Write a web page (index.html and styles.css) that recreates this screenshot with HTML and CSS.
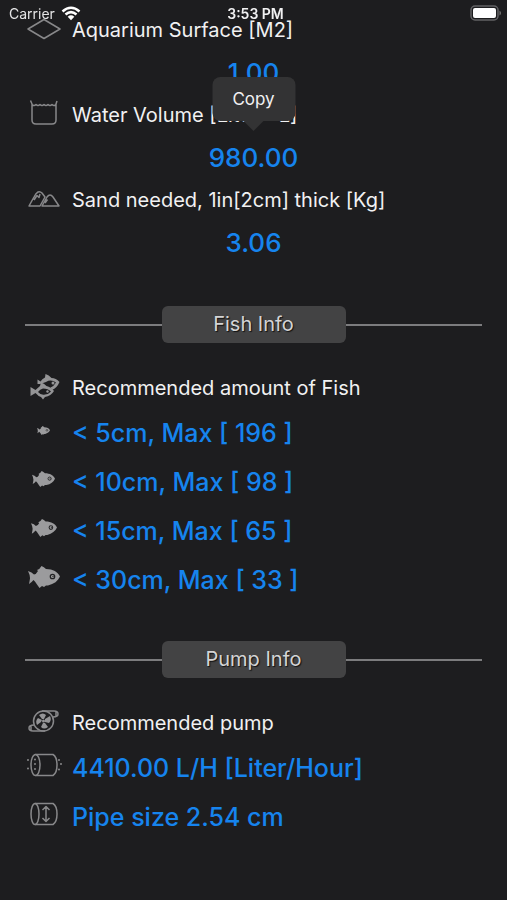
FILE: index.html
```html
<!DOCTYPE html>
<html lang="en">
<head>
<meta charset="utf-8">
<meta name="viewport" content="width=device-width, initial-scale=1">
<title>Aquarium Calculator</title>
<link rel="stylesheet" href="styles.css">
</head>
<body>
<svg class="sprite" aria-hidden="true">
  <symbol id="fish" viewBox="0 0 32 22">
    <path d="M0 5Q4 6 6 8.500Q8 8.500 10 5L9 4Q12 3 13.500 0Q16 1 18 3C25 3 30 6 32 10.500C30 15 26 18 20 19.500L18 19.500L16 21L14 20L11.500 22L9 18.500Q7 15 5.500 14Q4 16 1 18Q2 13 2 12Q2 9 0 5Z" fill="currentColor"/>
    <circle cx="24.500" cy="10.500" r="2.200" fill="#a3a3a3" stroke="#242426" stroke-width="1.300"/>
    <circle cx="25" cy="10.500" r=".7" fill="#242426"/>
  </symbol>
</svg>

<header class="status">
  <div class="carrier">
    <span>Carrier</span>
    <svg class="wifi" viewBox="0 0 20 15" aria-hidden="true">
      <path d="M1.500 5.500Q10 -2 18.500 5.500M4.500 8.500Q10 3.700 15.500 8.500" fill="none" stroke="currentColor" stroke-width="2.500"/>
      <path d="M6.700 10.700Q10 8 13.300 10.700L10 14.200Z" fill="currentColor"/>
    </svg>
  </div>
  <time class="clock">3:53 PM</time>
  <svg class="battery" viewBox="0 0 32 16" aria-hidden="true">
    <rect x="1" y="1" width="27" height="14" rx="4" fill="none" stroke="#626264" stroke-width="1.500"/>
    <rect x="3" y="3" width="23" height="10" rx="2" fill="#fff"/>
    <path d="M29.500 5.500Q31 6.500 31 8T29.500 10.500Z" fill="#777"/>
  </svg>
</header>

<main class="page">
  <section class="results">
    <div class="row">
      <svg class="icon" viewBox="0 0 36 36" aria-hidden="true"><path d="M3 19L19 9.500L35 19L19 28.500Z"/></svg>
      <span class="label">Aquarium Surface [M2]</span>
    </div>
    <div class="result"><output>1.00</output></div>

    <div class="row">
      <svg class="icon" viewBox="0 0 36 36" aria-hidden="true"><path d="M5.500 5.500L7 9V25Q7 29 11 29H27Q31 29 31 25V9L32 6M7 9.500Q9 11.500 11 9.500Q13 11.500 15 9.500Q17 11.500 19 9.500Q21 11.500 23 9.500Q25 11.500 27 9.500Q29 11.500 31 9.500"/></svg>
      <span class="label">Water Volume [Liter - L]</span>
    </div>
    <div class="result">
      <output>980.00</output>
      <button class="copy" type="button">Copy</button>
    </div>

    <div class="row">
      <svg class="icon" viewBox="0 0 36 36" aria-hidden="true"><path d="M15 26H4L9 17Q13 9 17 13L20 17L15 26ZM17 26L22 17Q25 13 28 17L34 26ZM9 20L12 15.500L14 17.500L15 14M20 23L22.500 19.500"/></svg>
      <span class="label">Sand needed, 1in[2cm] thick [Kg]</span>
    </div>
    <div class="result"><output>3.06</output></div>
  </section>

  <section class="group">
    <h2 class="divider"><span>Fish Info</span></h2>
    <div class="row">
      <svg class="icon" viewBox="0 0 36 36" aria-hidden="true">
        <path class="solid" d="M12.500 16V11.500L15.500 13.500Q17 11 20 9.500L20.500 6Q24 7 26.500 10Q31 10 34.500 14Q32 20 27 22L25.500 19.500Q29 18 31 14.500Q26 11 21 14L18 15L15 16Z"/>
        <path class="solid" fill-rule="evenodd" d="M5.500 19L10.500 22L15 18L16 14.500Q19 15 21.500 18Q26 19 29 23Q26 28 20 29L18 31.500L16 29Q13 28 10.500 25L5.500 28ZM13 24Q16 27.500 20 26.500Q24 26 26 23.500Q23 20.500 18 20.500Q15 21 13 24Z"/>
        <circle class="solid" cx="22.500" cy="23.500" r="1.200"/><circle class="solid" cx="28" cy="15" r="1.500"/>
      </svg>
      <span class="label">Recommended amount of Fish</span>
    </div>
    <div class="row value"><svg class="icon" viewBox="0 0 36 36" aria-hidden="true"><use href="#fish" x="12" y="14" width="13" height="9"/></svg><output>&lt; 5cm, Max [ 196 ]</output></div>
    <div class="row value"><svg class="icon" viewBox="0 0 36 36" aria-hidden="true"><use href="#fish" x="7" y="10" width="23" height="16"/></svg><output>&lt; 10cm, Max [ 98 ]</output></div>
    <div class="row value"><svg class="icon" viewBox="0 0 36 36" aria-hidden="true"><use href="#fish" x="6" y="9" width="26" height="18"/></svg><output>&lt; 15cm, Max [ 65 ]</output></div>
    <div class="row value"><svg class="icon" viewBox="0 0 36 36" aria-hidden="true"><use href="#fish" x="3" y="7" width="32" height="22"/></svg><output>&lt; 30cm, Max [ 33 ]</output></div>
  </section>

  <section class="group">
    <h2 class="divider"><span>Pump Info</span></h2>
    <div class="row">
      <svg class="icon" viewBox="0 0 36 36" aria-hidden="true">
        <circle cx="18.500" cy="18" r="10"/>
        <path d="M17 8H29Q33 8 33 11Q33 14 28 14M20 28H8Q4 28 4 25Q4 22 9 22M31 9V13M6 23V27"/>
        <path class="solid" d="M17 16L14 12Q18 9 21 12L19 16ZM20 16L25 13Q27 17 24 20L20 19ZM20 20L23 24Q19 27 16 24L18 20ZM16 19L12 22Q10 18 13 15L17 17Z"/>
        <circle class="solid" cx="18.500" cy="18" r="1.500"/>
      </svg>
      <span class="label">Recommended pump</span>
    </div>
    <div class="row value">
      <svg class="icon" viewBox="0 0 36 36" aria-hidden="true">
        <ellipse cx="10.500" cy="18" rx="4.500" ry="10.500"/><path d="M10.500 7.500H28Q32 10 32 18T28 28.500H10.500"/>
        <path class="dots" d="M3 13V13M3 21.500V21.500M10 12.500V12.500M10 17V17M10 22V22M34 13V13M36 17V17M34 22.500V22.500"/>
      </svg>
      <output>4410.00 L/H [Liter/Hour]</output>
    </div>
    <div class="row value">
      <svg class="icon" viewBox="0 0 36 36" aria-hidden="true">
        <ellipse cx="10" cy="18" rx="4" ry="10.500"/><path d="M10 7.500H28Q32 10 32 18T28 28.500H10M21 11V25M17.500 14L21 10.500L24.500 14M17.500 22L21 25.500L24.500 22"/>
      </svg>
      <output>Pipe size 2.54 cm</output>
    </div>
  </section>
</main>
</body>
</html>
```

FILE: styles.css
```css
* {
  box-sizing: border-box;
}

body {
  margin: 0;
  min-height: 100vh;
  background: #1d1d1f;
  color: #f1f1f2;
  font-family: Inter, "Liberation Sans", sans-serif;
}

.sprite {
  position: absolute;
  width: 0;
  height: 0;
}

/* The status bar floats over the scrolled page. */
.status {
  position: fixed;
  z-index: 2;
  top: 0;
  left: 0;
  right: 0;
  display: grid;
  grid-template-columns: 1fr auto 1fr;
  align-items: center;
  height: 26px;
  padding: 0 5px 0 9px;
  font-size: 14px;
}

.carrier {
  display: flex;
  align-items: center;
  gap: 6px;
  color: #e4e4e5;
}

.wifi {
  width: 20px;
  height: 15px;
  color: #fff;
}

.clock {
  font-weight: 600;
}

.battery {
  justify-self: end;
  width: 32px;
  height: 16px;
}

.page {
  padding: 10px 25px 40px;
}

.row {
  display: flex;
  align-items: center;
  gap: 11px;
  height: 40px;
}

.label {
  font-size: 20px;
  white-space: nowrap;
}

.icon {
  flex: none;
  width: 36px;
  height: 36px;
  margin-bottom: 4px;
  overflow: visible;
  color: #9b9b9d;
  fill: none;
  stroke: #88888a;
  stroke-width: 1.5;
  stroke-linejoin: round;
}

.icon use {
  stroke: none;
}

.icon .solid {
  fill: #949496;
  stroke: none;
}

.icon .dots {
  stroke-width: 2;
  stroke-linecap: round;
}

.results {
  padding-bottom: 4px;
}

.result {
  position: relative;
  display: flex;
  align-items: center;
  justify-content: center;
  height: 45px;
  font-size: 26px;
}

.result,
.value {
  color: #1684ee;
  font-weight: 500;
  white-space: nowrap;
}

.value {
  height: 49px;
  font-size: 25px;
}

.value .icon {
  margin-bottom: 6px;
}

/* Edit menu bubble above the selected value. */
.copy {
  position: absolute;
  bottom: calc(100% + 14px);
  left: 50%;
  width: 83px;
  height: 44px;
  padding: 0;
  transform: translateX(-50%);
  border: 0;
  border-radius: 8px;
  background: #333334;
  color: #f1f1f2;
  font: inherit;
  font-size: 17px;
  font-weight: 400;
}

.copy::after {
  content: "";
  position: absolute;
  top: 100%;
  left: 50%;
  transform: translateX(-50%);
  border: 10px solid transparent;
  border-top-color: #333334;
  border-bottom: 0;
}

.group {
  padding-top: 37px;
}

.divider {
  display: flex;
  align-items: center;
  margin: 0 0 25px;
  color: #d4d4d5;
  font-size: 20px;
  font-weight: 400;
}

.divider::before,
.divider::after {
  content: "";
  flex: 1;
  height: 2px;
  background: #7c7c7e;
}

.divider span {
  width: 184px;
  border-radius: 6px;
  background: #434344;
  line-height: 37px;
  text-align: center;
  text-shadow: 1px 1px 1px #111;
}
```
